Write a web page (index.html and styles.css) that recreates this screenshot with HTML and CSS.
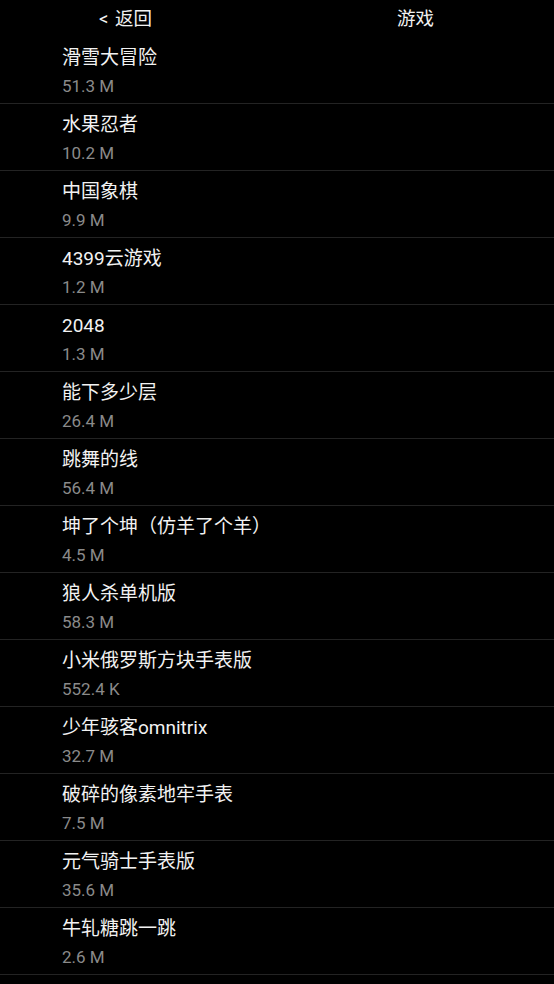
FILE: index.html
```html
<!DOCTYPE html>
<html lang="zh-CN">
<head>
<meta charset="utf-8">
<title>游戏</title>
<link rel="stylesheet" href="styles.css">
</head>
<body>
<header class="bar">
  <div class="back">&lt; 返回</div>
  <div class="title">游戏</div>
</header>
<ul class="list">
  <li class="item"><div class="name">滑雪大冒险</div><div class="size">51.3 M</div></li>
  <li class="item"><div class="name">水果忍者</div><div class="size">10.2 M</div></li>
  <li class="item"><div class="name">中国象棋</div><div class="size">9.9 M</div></li>
  <li class="item"><div class="name">4399云游戏</div><div class="size">1.2 M</div></li>
  <li class="item"><div class="name">2048</div><div class="size">1.3 M</div></li>
  <li class="item"><div class="name">能下多少层</div><div class="size">26.4 M</div></li>
  <li class="item"><div class="name">跳舞的线</div><div class="size">56.4 M</div></li>
  <li class="item"><div class="name">坤了个坤（仿羊了个羊）</div><div class="size">4.5 M</div></li>
  <li class="item"><div class="name">狼人杀单机版</div><div class="size">58.3 M</div></li>
  <li class="item"><div class="name">小米俄罗斯方块手表版</div><div class="size">552.4 K</div></li>
  <li class="item"><div class="name">少年骇客omnitrix</div><div class="size">32.7 M</div></li>
  <li class="item"><div class="name">破碎的像素地牢手表</div><div class="size">7.5 M</div></li>
  <li class="item"><div class="name">元气骑士手表版</div><div class="size">35.6 M</div></li>
  <li class="item"><div class="name">牛轧糖跳一跳</div><div class="size">2.6 M</div></li>
</ul>
</body>
</html>
```

FILE: styles.css
```css
html, body {
  margin: 0;
  padding: 0;
  background: #000;
}
body {
  width: 554px;
  height: 984px;
  overflow: hidden;
  font-family: Roboto, "Noto Sans CJK SC", sans-serif;
  color: #f2f2f2;
}
.bar {
  display: flex;
  height: 35px;
  padding-top: 2px;
  font-size: 18.5px;
  line-height: 35px;
}
.back {
  width: 277px;
  box-sizing: border-box;
  padding-left: 99px;
  word-spacing: 2px;
}
.title {
  flex: 1;
  text-align: center;
}
.list {
  list-style: none;
  margin: 0;
  padding: 0;
}
.item {
  padding: 9px 0 6px 62px;
  border-bottom: 1px solid #232323;
}
.name {
  font-size: 19px;
  line-height: 24px;
  color: #f2f2f2;
  white-space: nowrap;
}
.size {
  margin-top: 5px;
  font-size: 17px;
  line-height: 22px;
  color: #8a8a8a;
}
```
